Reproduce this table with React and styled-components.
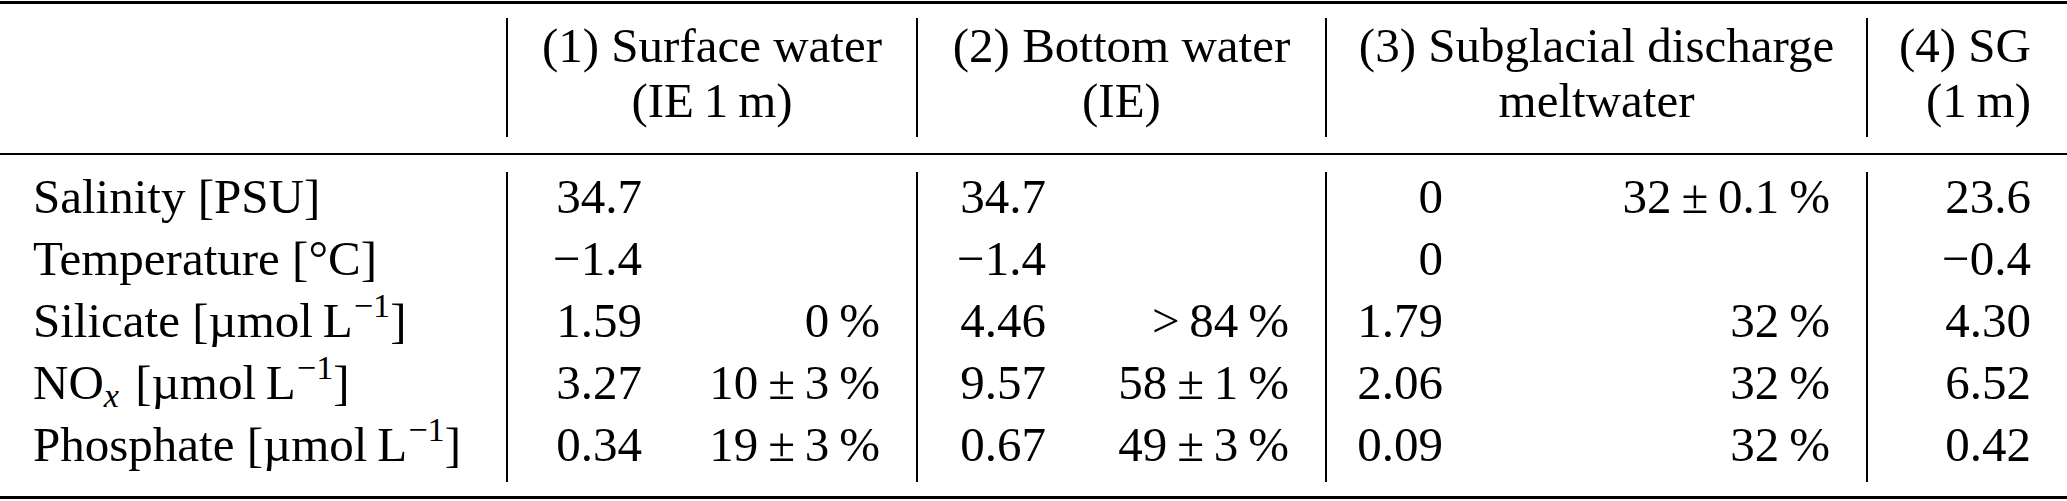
import { Fragment } from "react";
import styled, { createGlobalStyle } from "styled-components";

const GlobalStyle = createGlobalStyle`
  html, body {
    margin: 0;
    padding: 0;
    background: #fff;
  }
  body {
    font-family: "Liberation Serif", "Times New Roman", serif;
    color: #000;
  }
`;

const Table = styled.div`
  width: 2067px;
  padding-top: 1px;
  font-size: 49px;
`;

const Rule = styled.div`
  height: ${(p) => p.$thick}px;
  margin-top: ${(p) => p.$gap}px;
  background: #000;
`;

const HeaderRow = styled.div`
  display: grid;
  grid-template-columns: 506px 410px 409px 541px 201px;
  margin-top: 14px;
  height: 119px;
`;

const HeadCell = styled.div`
  border-left: ${(p) => (p.$divider ? "2px solid #000" : "none")};
  padding-right: ${(p) => (p.$right ? "36px" : "0")};
  text-align: ${(p) => (p.$right ? "right" : "center")};
  line-height: 55px;
  white-space: nowrap;
`;

const Body = styled.div`
  display: grid;
  grid-template-columns: 506px 172px 238px 166px 243px 154px 387px 201px;
  grid-auto-rows: 62px;
  margin-top: 17px;
`;

const Label = styled.div`
  padding-left: 33px;
  line-height: 50px;
  white-space: nowrap;
`;

const NumCell = styled.div`
  border-left: ${(p) => (p.$divider ? "2px solid #000" : "none")};
  padding-right: 36px;
  text-align: right;
  line-height: 50px;
  white-space: nowrap;
`;

const Sup = styled.sup`
  font-size: 0.7em;
  line-height: 0;
  vertical-align: 0.58em;
  margin-left: 1px;
`;

const Sub = styled.sub`
  font-size: 0.7em;
  font-style: italic;
  line-height: 0;
  vertical-align: -0.22em;
  margin-right: 4px;
`;

const ts = "\u2009";

const perL = (
  <>
    [µmol{ts}L<Sup>−1</Sup>]
  </>
);

const rows = [
  {
    label: <>Salinity [PSU]</>,
    cells: ["34.7", "", "34.7", "", "0", `32${ts}±${ts}0.1${ts}%`, "23.6"],
  },
  {
    label: <>Temperature [°C]</>,
    cells: ["−1.4", "", "−1.4", "", "0", "", "−0.4"],
  },
  {
    label: <>Silicate {perL}</>,
    cells: ["1.59", `0${ts}%`, "4.46", `>${ts}84${ts}%`, "1.79", `32${ts}%`, "4.30"],
  },
  {
    label: (
      <>
        NO<Sub>x</Sub> {perL}
      </>
    ),
    cells: ["3.27", `10${ts}±${ts}3${ts}%`, "9.57", `58${ts}±${ts}1${ts}%`, "2.06", `32${ts}%`, "6.52"],
  },
  {
    label: <>Phosphate {perL}</>,
    cells: ["0.34", `19${ts}±${ts}3${ts}%`, "0.67", `49${ts}±${ts}3${ts}%`, "0.09", `32${ts}%`, "0.42"],
  },
];

// columns that start a new group get the vertical line
const dividers = [true, false, true, false, true, false, true];

function App() {
  return (
    <>
      <GlobalStyle />
      <Table>
        <Rule $thick={3} $gap={0} />
        <HeaderRow>
          <div />
          <HeadCell $divider>
            (1) Surface water
            <br />
            (IE{ts}1{ts}m)
          </HeadCell>
          <HeadCell $divider>
            (2) Bottom water
            <br />
            (IE)
          </HeadCell>
          <HeadCell $divider>
            (3) Subglacial discharge
            <br />
            meltwater
          </HeadCell>
          <HeadCell $divider $right>
            (4) SG
            <br />
            (1{ts}m)
          </HeadCell>
        </HeaderRow>
        <Rule $thick={2} $gap={16} />
        <Body>
          {rows.map((row, i) => (
            <Fragment key={i}>
              <Label>{row.label}</Label>
              {row.cells.map((c, j) => (
                <NumCell key={j} $divider={dividers[j]}>
                  {c}
                </NumCell>
              ))}
            </Fragment>
          ))}
        </Body>
        <Rule $thick={3} $gap={14} />
      </Table>
    </>
  );
}

export default App;
